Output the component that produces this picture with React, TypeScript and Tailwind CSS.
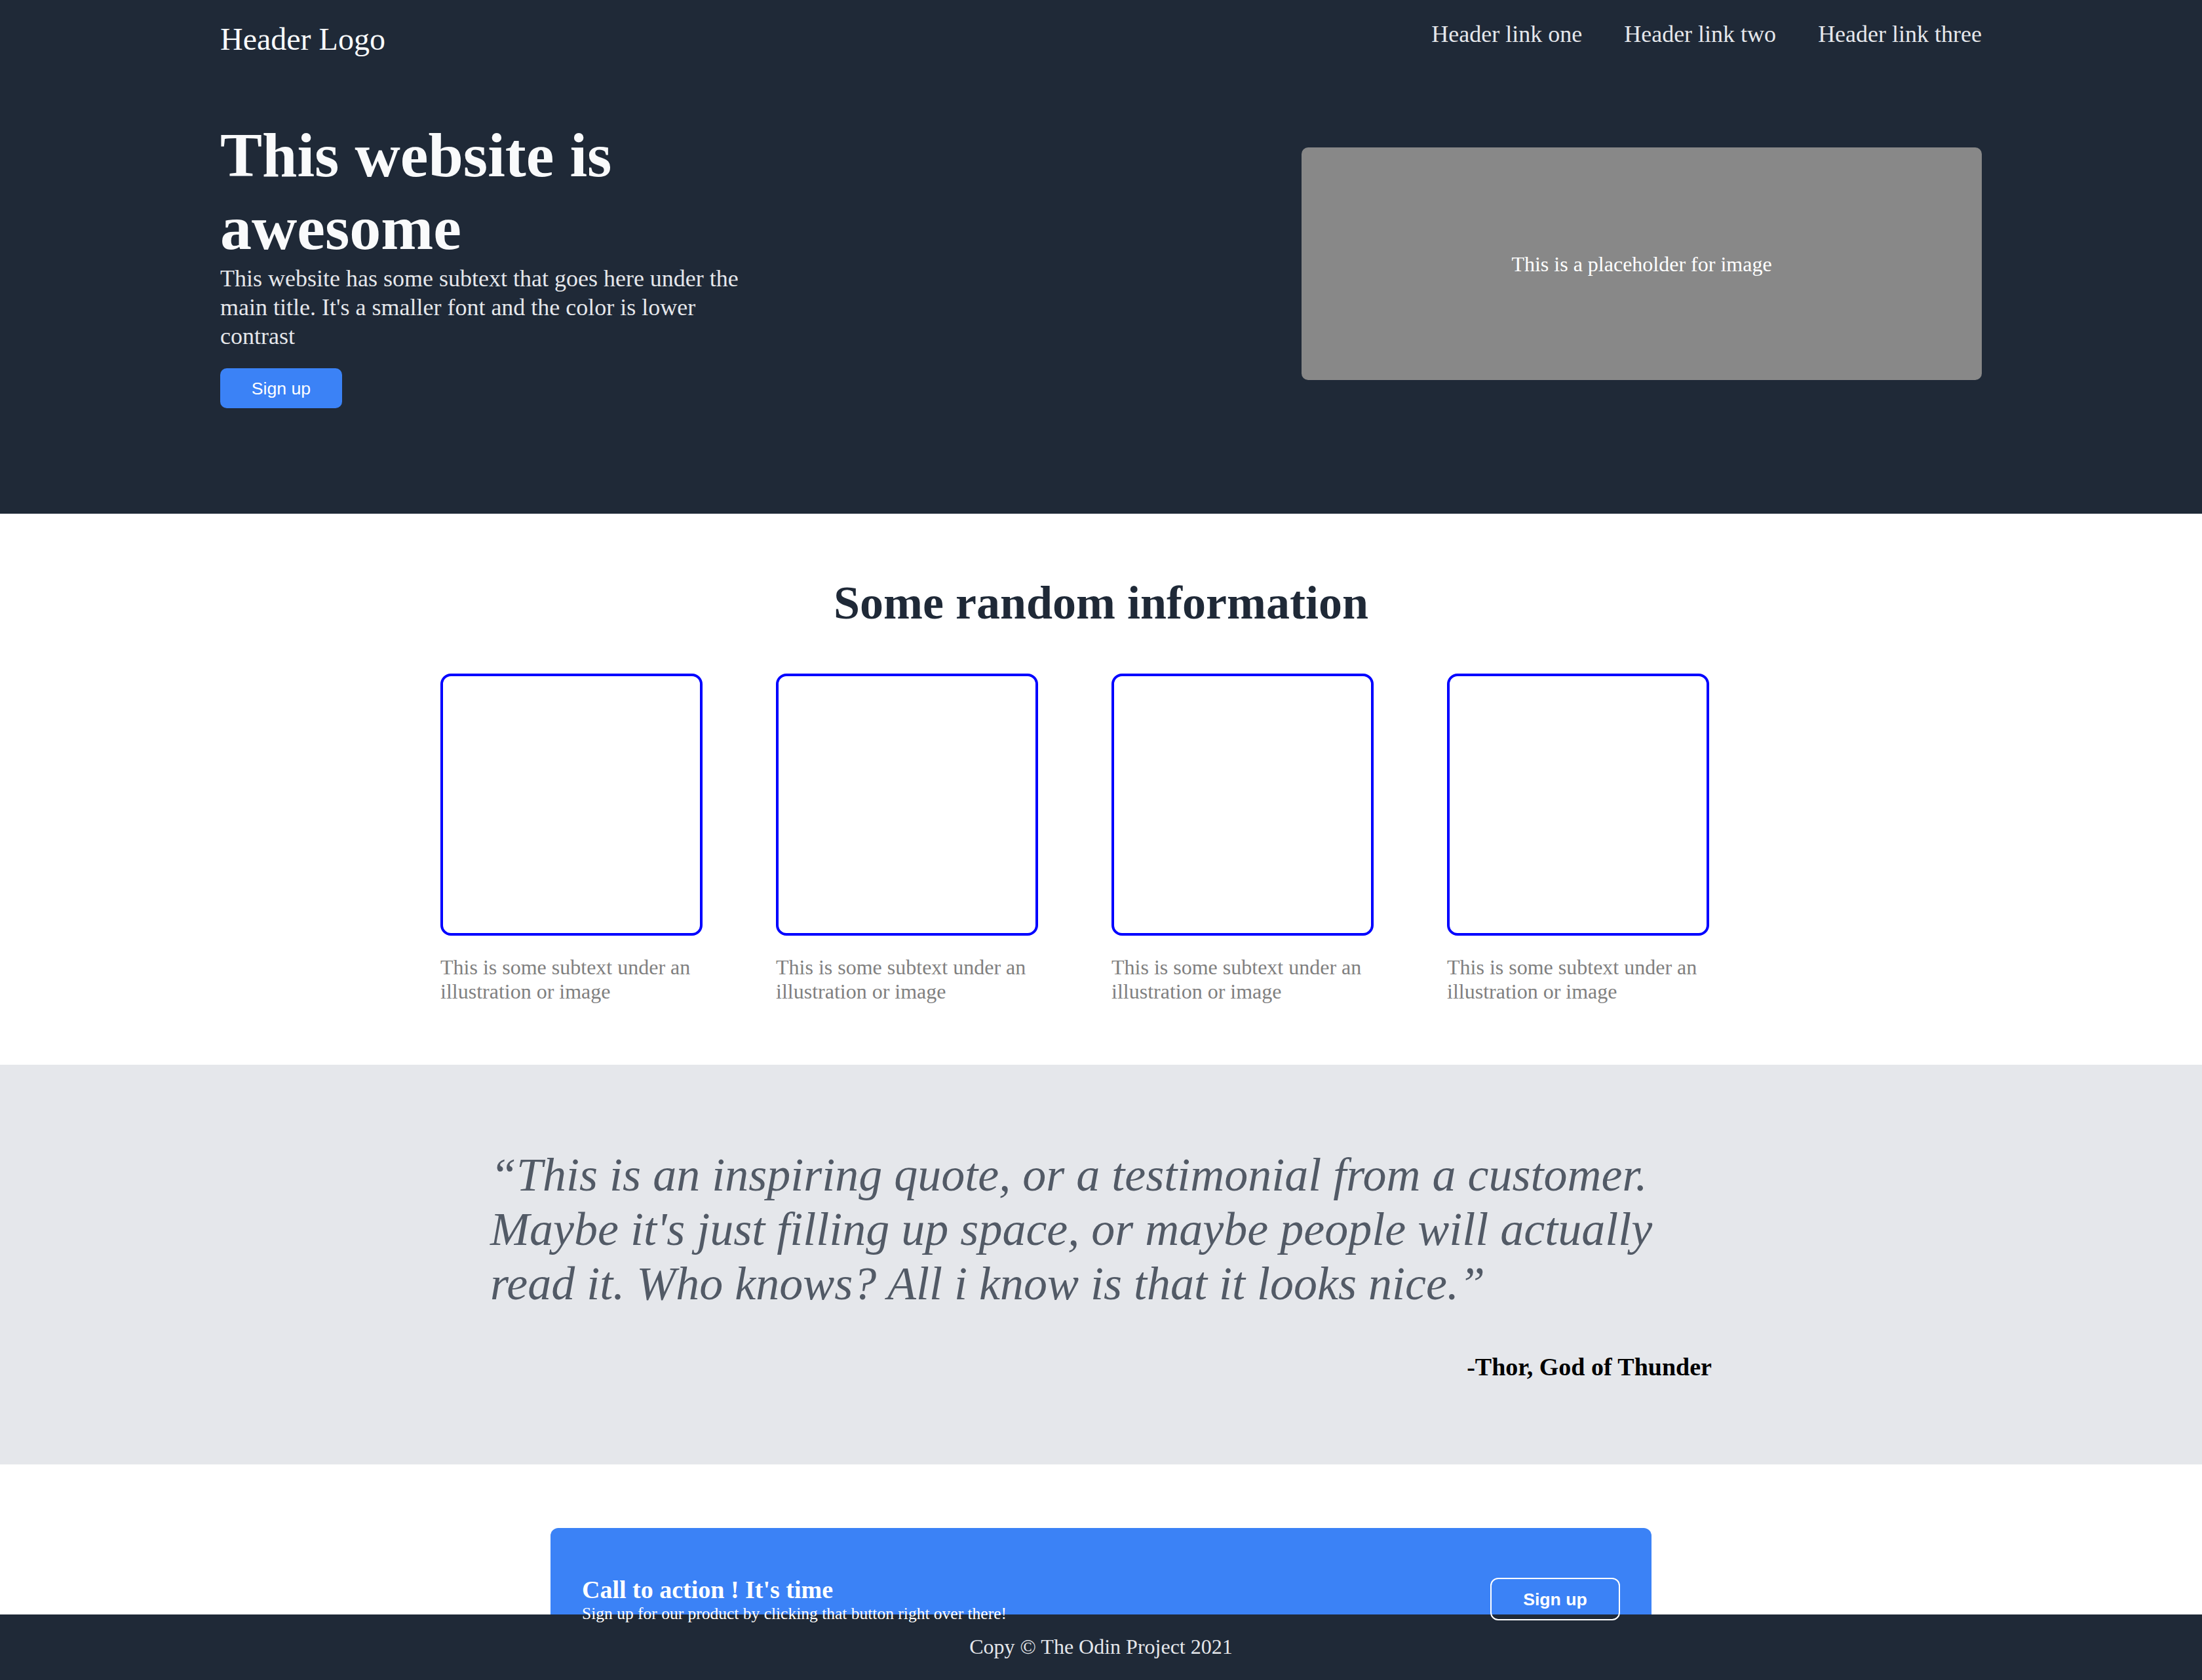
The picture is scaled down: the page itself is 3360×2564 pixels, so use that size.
import React from "react";

const serif = "font-['Liberation_Serif','Times_New_Roman',serif]";
const sans = "font-['Liberation_Sans',Arial,sans-serif]";

function Card() {
  return (
    <div className="w-[480px]">
      <div className="w-[400px] h-[400px] border-[4px] border-[#0000ff] rounded-[16px] bg-white" />
      <p className="mt-[30px] text-[32px] leading-[36.8px] text-[#808080]">
        This is some subtext under an illustration or image
      </p>
    </div>
  );
}

export default function App() {
  return (
    <div className={`h-[2564px] overflow-hidden bg-white ${serif}`}>
      {/* Hero */}
      <section className="bg-[#1f2937] pt-[32px] pb-[161px]">
        <div className="mx-auto w-[2688px]">
          <header className="flex items-start justify-between">
            <div className="text-[48px] leading-[55.2px] text-[#f9fafb]">Header Logo</div>
            <nav className="flex gap-[64px] text-[36px] leading-[41.4px] text-[#e5e7eb]">
              <a>Header link one</a>
              <a>Header link two</a>
              <a>Header link three</a>
            </nav>
          </header>
          <div className="mt-[95px] flex items-center justify-between">
            <div className="w-[820px]">
              <h1 className="text-[96px] leading-[110.4px] font-bold text-[#f9fafb]">
                This website is awesome
              </h1>
              <p className="text-[36px] leading-[44px] text-[#e5e7eb]">
                This website has some subtext that goes here under the main title. It's a smaller font and the color is lower contrast
              </p>
              <button
                className={`mt-[27px] flex h-[61px] w-[186px] items-center justify-center rounded-[10px] bg-[#3b82f6] text-[26.67px] text-white ${sans}`}
              >
                Sign up
              </button>
            </div>
            <div className="flex h-[355px] w-[1038px] items-center justify-center rounded-[10px] bg-[#888888] text-[32px] text-white">
              This is a placeholder for image
            </div>
          </div>
        </div>
      </section>

      {/* Info */}
      <section className="pt-[95px] pb-[94px]">
        <h2 className="text-center text-[72px] leading-[82.8px] font-bold text-[#1f2937]">
          Some random information
        </h2>
        <div className="mt-[66px] flex justify-center gap-[32px]">
          <Card />
          <Card />
          <Card />
          <Card />
        </div>
      </section>

      {/* Quote */}
      <section className="bg-[#e5e7eb] py-[127px]">
        <div className="mx-auto w-[1864px]">
          <p className="text-[72px] leading-[82.8px] italic text-[#525a66]">
            “This is an inspiring quote, or a testimonial from a customer. Maybe it's just filling up space, or maybe people will actually read it. Who knows? All i know is that it looks nice.”
          </p>
          <p className="mt-[64px] text-right text-[38px] leading-[43px] font-bold text-black">
            -Thor, God of Thunder
          </p>
        </div>
      </section>

      {/* CTA: fixed-height section, box overflows under the footer in flow */}
      <section className="h-[229px] pt-[97px]">
        <div className="mx-auto flex w-[1680px] items-center justify-between rounded-[12px] bg-[#3b82f6] px-[48px] py-[72px]">
          <div className="text-white">
            <h3 className="text-[38px] leading-[44px] font-bold">Call to action ! It's time</h3>
            <p className="text-[25.5px] leading-[30px]">
              Sign up for our product by clicking that button right over there!
            </p>
          </div>
          <button
            className={`flex h-[65px] w-[198px] items-center justify-center rounded-[12px] border-2 border-white text-[26.67px] font-bold text-white ${sans}`}
          >
            Sign up
          </button>
        </div>
      </section>

      {/* Footer */}
      <footer className="flex h-[100px] w-full items-center justify-center bg-[#1f2937] text-[32px] leading-[36.8px] text-[#e5e7eb]">
        Copy © The Odin Project 2021
      </footer>
    </div>
  );
}
